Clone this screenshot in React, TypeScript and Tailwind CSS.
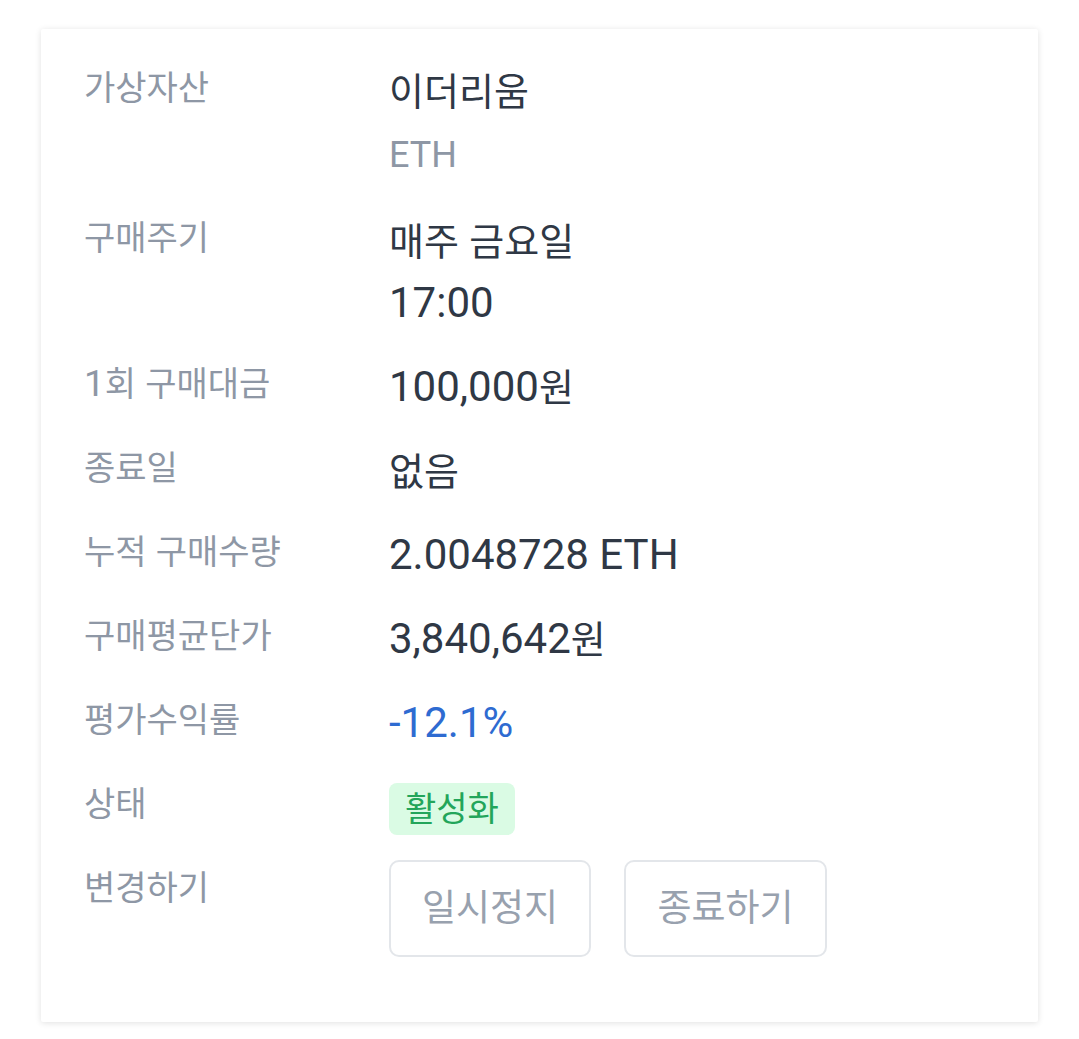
const HANGUL = /([\uAC00-\uD7A3\u3131-\u318E]+)/;

// Hangul runs a bit smaller than the Latin text, as in the reference
function Mixed({ text, ko }: { text: string; ko: string }) {
  return (
    <>
      {text.split(HANGUL).filter(Boolean).map((part, i) =>
        HANGUL.test(part) ? (
          <span key={i} className={`${ko} leading-none`}>
            {part}
          </span>
        ) : (
          <span key={i}>{part}</span>
        )
      )}
    </>
  );
}

const rows: { label: string; lines: string[]; sub?: string; tone?: string }[] = [
  { label: "가상자산", lines: ["이더리움"], sub: "ETH" },
  { label: "구매주기", lines: ["매주 금요일", "17:00"] },
  { label: "1회 구매대금", lines: ["100,000원"] },
  { label: "종료일", lines: ["없음"] },
  { label: "누적 구매수량", lines: ["2.0048728 ETH"] },
  { label: "구매평균단가", lines: ["3,840,642원"] },
  { label: "평가수익률", lines: ["-12.1%"], tone: "text-[#2e6bd1]" },
];

function Label({ text }: { text: string }) {
  return (
    <div className="text-[37px] leading-[56px] text-[#8e97a5]">
      <Mixed text={text} ko="text-[34px]" />
    </div>
  );
}

export default function App() {
  return (
    <div className="min-h-screen bg-white pt-[29px] pl-[41px] font-['Roboto','Noto_Sans_CJK_KR',sans-serif]">
      <div className="w-[997px] bg-white rounded-[2px] shadow-[0_1px_6px_rgba(0,0,0,0.12)] pt-[31px] pb-[65px] pl-[43px]">
        <div className="grid grid-cols-[305px_1fr] gap-y-[22px]">
          {rows.map((r) => (
            <div key={r.label} className="contents">
              <Label text={r.label} />
              <div>
                {r.lines.map((l) => (
                  <div key={l} className={`text-[42px] leading-[62px] ${r.tone ?? "text-[#2f3845]"}`}>
                    <Mixed text={l} ko="text-[38px]" />
                  </div>
                ))}
                {r.sub && (
                  <div className="text-[36px] leading-[66px] text-[#8e97a5]">{r.sub}</div>
                )}
              </div>
            </div>
          ))}

          <Label text="상태" />
          <div className="h-[62px] pt-[7px]">
            <span className="inline-flex h-[52px] items-center rounded-[8px] bg-[#dafbe4] px-[16px] text-[34px] text-[#23a55a]">
              활성화
            </span>
          </div>

          <Label text="변경하기" />
          <div className="flex gap-[33px]">
            <button className="h-[97px] w-[202px] rounded-[10px] border-2 border-[#e3e6ea] bg-white text-[37px] text-[#98a1ae]">
              일시정지
            </button>
            <button className="h-[97px] w-[203px] rounded-[10px] border-2 border-[#e3e6ea] bg-white text-[37px] text-[#98a1ae]">
              종료하기
            </button>
          </div>
        </div>
      </div>
    </div>
  );
}
